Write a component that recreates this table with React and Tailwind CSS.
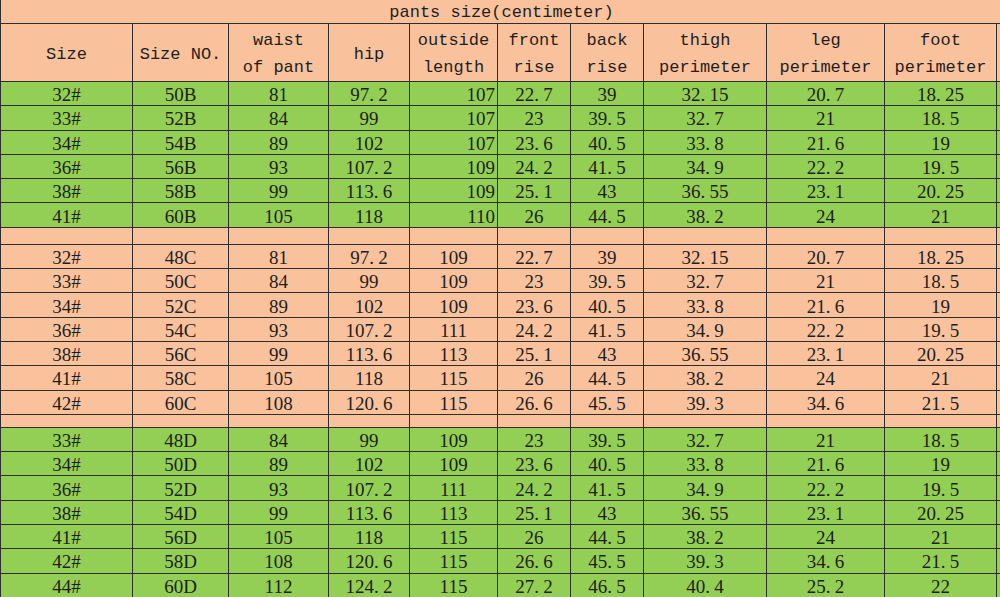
const cols = "grid grid-cols-[133px_96px_100px_81px_88px_73px_73px_123px_118px_112px_3px]";

const heads = [
  ["Size"],
  ["Size NO."],
  ["waist", "of pant"],
  ["hip"],
  ["outside", "length"],
  ["front", "rise"],
  ["back", "rise"],
  ["thigh", "perimeter"],
  ["leg", "perimeter"],
  ["foot", "perimeter"],
];

const bRows = [
  ["32#", "50B", "81", "97.2", "107", "22.7", "39", "32.15", "20.7", "18.25"],
  ["33#", "52B", "84", "99", "107", "23", "39.5", "32.7", "21", "18.5"],
  ["34#", "54B", "89", "102", "107", "23.6", "40.5", "33.8", "21.6", "19"],
  ["36#", "56B", "93", "107.2", "109", "24.2", "41.5", "34.9", "22.2", "19.5"],
  ["38#", "58B", "99", "113.6", "109", "25.1", "43", "36.55", "23.1", "20.25"],
  ["41#", "60B", "105", "118", "110", "26", "44.5", "38.2", "24", "21"],
];

const cRows = [
  ["32#", "48C", "81", "97.2", "109", "22.7", "39", "32.15", "20.7", "18.25"],
  ["33#", "50C", "84", "99", "109", "23", "39.5", "32.7", "21", "18.5"],
  ["34#", "52C", "89", "102", "109", "23.6", "40.5", "33.8", "21.6", "19"],
  ["36#", "54C", "93", "107.2", "111", "24.2", "41.5", "34.9", "22.2", "19.5"],
  ["38#", "56C", "99", "113.6", "113", "25.1", "43", "36.55", "23.1", "20.25"],
  ["41#", "58C", "105", "118", "115", "26", "44.5", "38.2", "24", "21"],
  ["42#", "60C", "108", "120.6", "115", "26.6", "45.5", "39.3", "34.6", "21.5"],
];

const dRows = [
  ["33#", "48D", "84", "99", "109", "23", "39.5", "32.7", "21", "18.5"],
  ["34#", "50D", "89", "102", "109", "23.6", "40.5", "33.8", "21.6", "19"],
  ["36#", "52D", "93", "107.2", "111", "24.2", "41.5", "34.9", "22.2", "19.5"],
  ["38#", "54D", "99", "113.6", "113", "25.1", "43", "36.55", "23.1", "20.25"],
  ["41#", "56D", "105", "118", "115", "26", "44.5", "38.2", "24", "21"],
  ["42#", "58D", "108", "120.6", "115", "26.6", "45.5", "39.3", "34.6", "21.5"],
  ["44#", "60D", "112", "124.2", "115", "27.2", "46.5", "40.4", "25.2", "22"],
];

// the source font draws "." as a half-width glyph, so give it room
function Num({ v }) {
  const [a, b] = v.split(".");
  if (b === undefined) return v;
  return (
    <>
      {a}
      <span className="inline-block w-[9px] text-left">.</span>
      {b}
    </>
  );
}

function Row({ cells, bg, rightOutside }) {
  return (
    <div className={`${cols} h-[24.3px] border-b border-[#2e2e2e] ${bg}`}>
      {cells.map((c, i) => (
        <div
          key={i}
          className={`flex items-center pt-[2px] border-r border-[#2e2e2e] ${i === 0 ? "border-l" : ""} ${
            i === 4 && rightOutside ? "justify-end pr-[2px]" : "justify-center"
          }`}
        >
          <Num v={c} />
        </div>
      ))}
      <div />
    </div>
  );
}

function Blank({ h }) {
  return (
    <div className={`${cols} ${h} border-b border-[#2e2e2e] bg-[#f9c29d]`}>
      {heads.map((_, i) => (
        <div key={i} className={`border-r border-[#2e2e2e] ${i === 0 ? "border-l" : ""}`} />
      ))}
      <div />
    </div>
  );
}

export default function App() {
  return (
    <div className="w-[1000px] h-[597px] overflow-hidden bg-[#f9c29d] text-[#1e1e1e]">
      {/* title */}
      <div className="h-[24px] pt-[3px] border-b border-l border-[#2e2e2e] flex items-center justify-center font-['Liberation_Mono',monospace] text-[17px] pl-[2px]">
        pants size(centimeter)
      </div>

      {/* header */}
      <div className={`${cols} h-[58px] border-b border-[#2e2e2e] font-['Liberation_Mono',monospace] text-[17px] leading-[27px]`}>
        {heads.map((h, i) => (
          <div
            key={i}
            className={`flex flex-col items-center justify-center pt-[3px] border-r border-[#2e2e2e] ${i === 0 ? "border-l" : ""}`}
          >
            {h.map((t) => (
              <span key={t} className="whitespace-pre">{t}</span>
            ))}
          </div>
        ))}
        <div />
      </div>

      <div className="font-['Liberation_Serif',serif] text-[19px] leading-none">
        {bRows.map((r) => (
          <Row key={r[1]} cells={r} bg="bg-[#93cf54]" rightOutside />
        ))}
        <Blank h="h-[17px]" />
        {cRows.map((r) => (
          <Row key={r[1]} cells={r} bg="bg-[#f9c29d]" />
        ))}
        <Blank h="h-[13px]" />
        {dRows.map((r) => (
          <Row key={r[1]} cells={r} bg="bg-[#93cf54]" />
        ))}
      </div>
    </div>
  );
}
